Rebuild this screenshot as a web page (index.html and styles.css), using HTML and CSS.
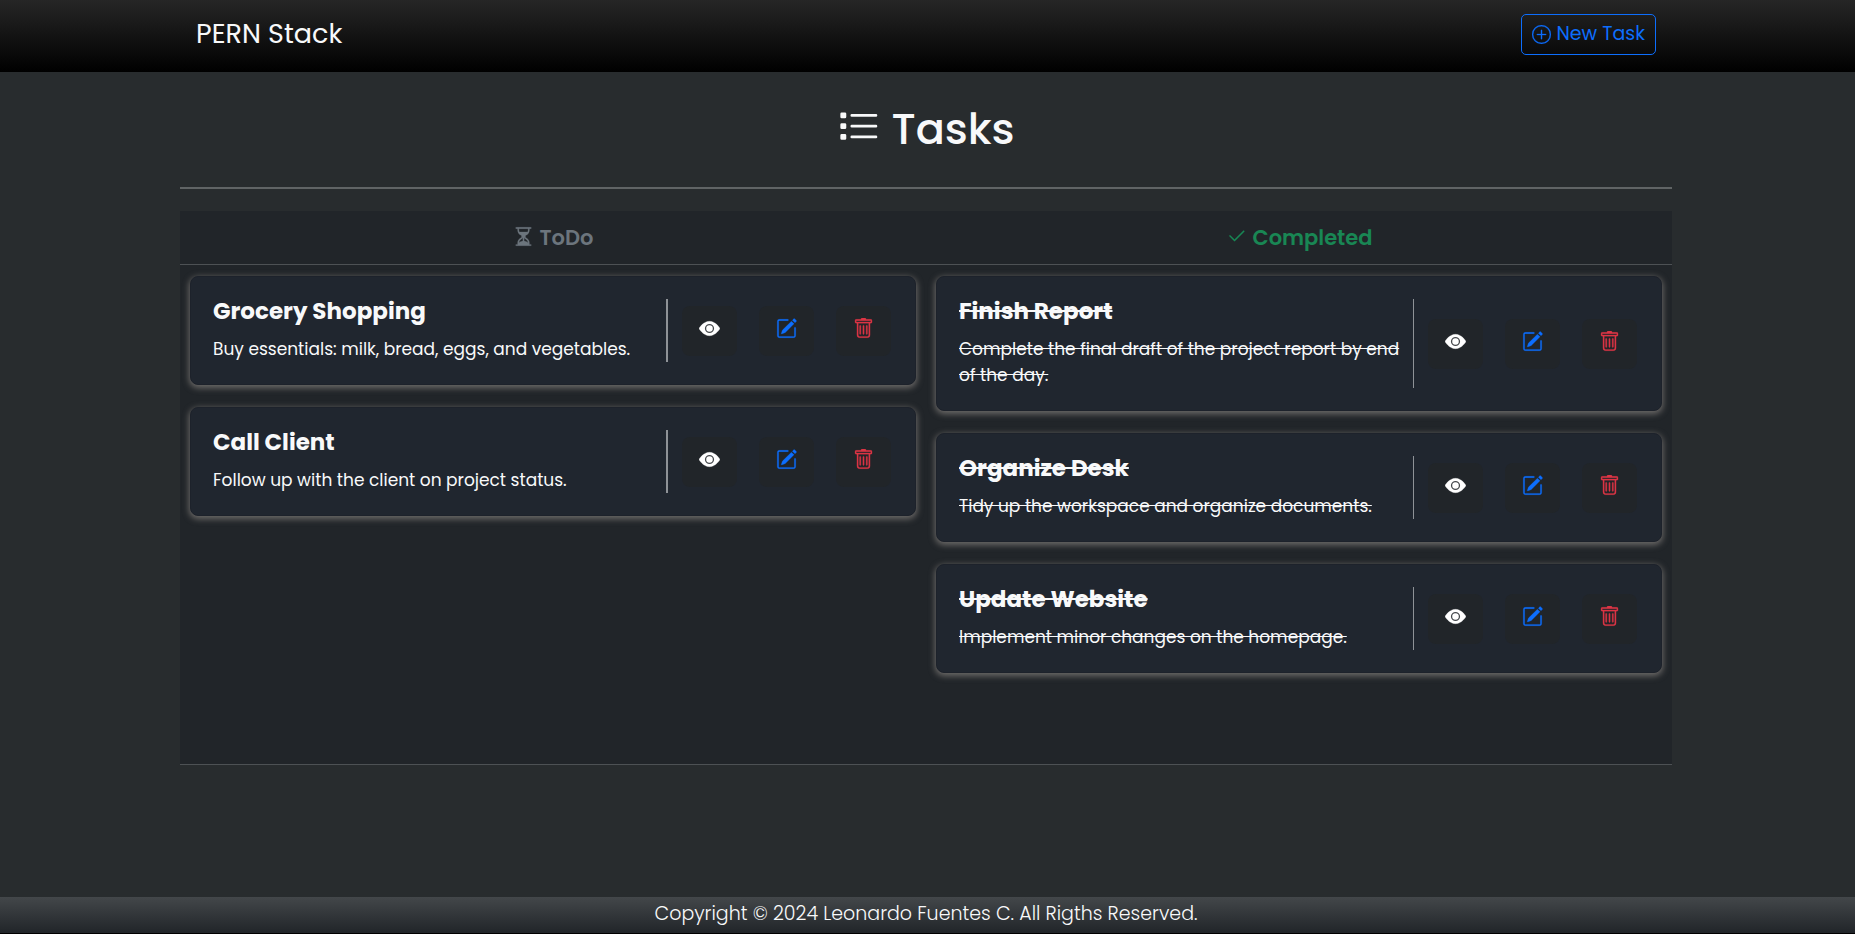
FILE: index.html
```html
<!DOCTYPE html>
<html lang="en">
<head>
<meta charset="utf-8">
<meta name="viewport" content="width=device-width, initial-scale=1">
<title>PERN Stack</title>
<link rel="stylesheet" href="styles.css">
</head>
<body>
<svg class="sprite" aria-hidden="true">
  <symbol id="eye" viewBox="0 0 16 16"><path d="M10.5 8a2.5 2.5 0 1 1-5 0 2.500 2.500 0 0 1 5 0"/><path d="M0 8s3-5.500 8-5.500S16 8 16 8s-3 5.500-8 5.500S0 8 0 8m8 3.500a3.500 3.500 0 1 0 0-7 3.500 3.500 0 0 0 0 7"/></symbol>
  <symbol id="edit" viewBox="0 0 16 16"><path d="M15.502 1.940a.5.5 0 0 1 0 .706L14.459 3.690l-2-2L13.502.646a.5.5 0 0 1 .707 0l1.293 1.293zm-1.750 2.456-2-2L4.939 9.210a.5.5 0 0 0-.121.196l-.805 2.414a.25.25 0 0 0 .316.316l2.414-.805a.5.5 0 0 0 .196-.12z"/><path fill-rule="evenodd" d="M1 13.500A1.500 1.500 0 0 0 2.500 15h11a1.500 1.500 0 0 0 1.500-1.500v-6a.5.5 0 0 0-1 0v6a.5.5 0 0 1-.5.5h-11a.5.5 0 0 1-.5-.5v-11a.5.5 0 0 1 .5-.5H9a.5.5 0 0 0 0-1H2.500A1.500 1.500 0 0 0 1 2.500z"/></symbol>
  <symbol id="trash" viewBox="0 0 16 16"><path d="M5.5 5.5A.5.5 0 0 1 6 6v6a.5.5 0 0 1-1 0V6a.5.5 0 0 1 .5-.5m2.500 0a.5.5 0 0 1 .5.5v6a.5.5 0 0 1-1 0V6a.5.5 0 0 1 .5-.5m3 .5a.5.5 0 0 0-1 0v6a.5.5 0 0 0 1 0z"/><path d="M14.5 3a1 1 0 0 1-1 1H13v9a2 2 0 0 1-2 2H5a2 2 0 0 1-2-2V4h-.5a1 1 0 0 1-1-1V2a1 1 0 0 1 1-1H6a1 1 0 0 1 1-1h2a1 1 0 0 1 1 1h3.500a1 1 0 0 1 1 1zM4.118 4 4 4.059V13a1 1 0 0 0 1 1h6a1 1 0 0 0 1-1V4.059L11.882 4zM2.500 3h11V2h-11z"/></symbol>
</svg>
<header class="navbar">
  <div class="navbar-inner">
    <a class="brand" href="#">PERN Stack</a>
    <a class="new-task" href="#new"><svg class="icon" viewBox="0 0 16 16" aria-hidden="true"><path d="M8 15A7 7 0 1 1 8 1a7 7 0 0 1 0 14m0 1A8 8 0 1 0 8 0a8 8 0 0 0 0 16"/><path d="M8 4a.5.5 0 0 1 .5.5v3h3a.5.5 0 0 1 0 1h-3v3a.5.5 0 0 1-1 0v-3h-3a.5.5 0 0 1 0-1h3v-3A.5.5 0 0 1 8 4"/></svg>New Task</a>
  </div>
</header>
<main class="page">
  <h1 class="title"><svg class="icon" viewBox="0 0 16 16" aria-hidden="true"><path fill-rule="evenodd" d="M5 11.500a.5.5 0 0 1 .5-.5h9a.5.5 0 0 1 0 1h-9a.5.5 0 0 1-.5-.5m0-4a.5.5 0 0 1 .5-.5h9a.5.5 0 0 1 0 1h-9a.5.5 0 0 1-.5-.5m0-4a.5.5 0 0 1 .5-.5h9a.5.5 0 0 1 0 1h-9a.5.5 0 0 1-.5-.5M1.750 2.400a.5.5 0 0 0-.5.5v1.200a.5.5 0 0 0 .5.5h1.200a.5.5 0 0 0 .5-.5V2.900a.5.5 0 0 0-.5-.5zm0 4h1.200a.5.5 0 0 1 .5.5v1.200a.5.5 0 0 1-.5.5h-1.200a.5.5 0 0 1-.5-.5V6.900a.5.5 0 0 1 .5-.5m0 4h1.200a.5.5 0 0 1 .5.5v1.200a.5.5 0 0 1-.5.5h-1.200a.5.5 0 0 1-.5-.5v-1.200a.5.5 0 0 1 .5-.5"/></svg>Tasks</h1>
  <hr class="rule">
  <div class="board">
    <section class="column">
      <h2 class="column-title todo"><svg class="icon" viewBox="0 0 16 16" aria-hidden="true"><path d="M2.500 15a.5.5 0 1 1 0-1h1v-1a4.500 4.500 0 0 1 2.557-4.060c.29-.139.443-.377.443-.590v-.7c0-.213-.154-.451-.443-.590A4.500 4.500 0 0 1 3.500 3V2h-1a.5.5 0 0 1 0-1h11a.5.5 0 0 1 0 1h-1v1a4.500 4.500 0 0 1-2.557 4.060c-.29.139-.443.377-.443.590v.7c0 .213.154.451.443.590A4.500 4.500 0 0 1 12.500 13v1h1a.5.5 0 0 1 0 1zm2-13v1c0 .537.120 1.045.337 1.500h6.326c.216-.455.337-.963.337-1.500V2zm3 6.350c0 .701-.478 1.236-1.011 1.492A3.500 3.500 0 0 0 4.500 13s.866-1.299 3-1.480zm1 0v3.170c2.134.181 3 1.480 3 1.480a3.500 3.500 0 0 0-1.989-3.158C8.978 9.586 8.500 9.052 8.500 8.351z"/></svg>ToDo</h2>
      <div class="cards">
        <article class="card">
          <div class="card-text"><h3>Grocery Shopping</h3><p>Buy essentials: milk, bread, eggs, and vegetables.</p></div>
          <div class="actions"><button class="view" aria-label="View"><svg class="icon"><use href="#eye"/></svg></button><button class="edit" aria-label="Edit"><svg class="icon"><use href="#edit"/></svg></button><button class="delete" aria-label="Delete"><svg class="icon"><use href="#trash"/></svg></button></div>
        </article>
        <article class="card">
          <div class="card-text"><h3>Call Client</h3><p>Follow up with the client on project status.</p></div>
          <div class="actions"><button class="view" aria-label="View"><svg class="icon"><use href="#eye"/></svg></button><button class="edit" aria-label="Edit"><svg class="icon"><use href="#edit"/></svg></button><button class="delete" aria-label="Delete"><svg class="icon"><use href="#trash"/></svg></button></div>
        </article>
      </div>
    </section>
    <section class="column">
      <h2 class="column-title completed"><svg class="icon" viewBox="0 0 16 16" aria-hidden="true"><path d="M13.854 3.646a.5.5 0 0 1 0 .708l-7 7a.5.5 0 0 1-.708 0l-3.500-3.500a.5.5 0 1 1 .708-.708L6.500 10.293l6.646-6.647a.5.5 0 0 1 .708 0"/></svg>Completed</h2>
      <div class="cards">
        <article class="card done">
          <div class="card-text"><h3>Finish Report</h3><p>Complete the final draft of the project report by end of the day.</p></div>
          <div class="actions"><button class="view" aria-label="View"><svg class="icon"><use href="#eye"/></svg></button><button class="edit" aria-label="Edit"><svg class="icon"><use href="#edit"/></svg></button><button class="delete" aria-label="Delete"><svg class="icon"><use href="#trash"/></svg></button></div>
        </article>
        <article class="card done">
          <div class="card-text"><h3>Organize Desk</h3><p>Tidy up the workspace and organize documents.</p></div>
          <div class="actions"><button class="view" aria-label="View"><svg class="icon"><use href="#eye"/></svg></button><button class="edit" aria-label="Edit"><svg class="icon"><use href="#edit"/></svg></button><button class="delete" aria-label="Delete"><svg class="icon"><use href="#trash"/></svg></button></div>
        </article>
        <article class="card done">
          <div class="card-text"><h3>Update Website</h3><p>Implement minor changes on the homepage.</p></div>
          <div class="actions"><button class="view" aria-label="View"><svg class="icon"><use href="#eye"/></svg></button><button class="edit" aria-label="Edit"><svg class="icon"><use href="#edit"/></svg></button><button class="delete" aria-label="Delete"><svg class="icon"><use href="#trash"/></svg></button></div>
        </article>
      </div>
    </section>
  </div>
</main>
<footer class="footer">Copyright © 2024 Leonardo Fuentes C. All Rigths Reserved.</footer>
</body>
</html>
```

FILE: styles.css
```css
* { box-sizing: border-box; }

body {
  margin: 0;
  min-height: 100vh;
  display: flex;
  flex-direction: column;
  background: #282c2e;
  color: #f8f9fa;
  font: 17px/26px Poppins, Inter, "Liberation Sans", sans-serif;
}

h1, h2, h3, p { margin: 0; }
a { text-decoration: none; }
.sprite { display: none; }
.icon { width: 1em; height: 1em; fill: currentColor; stroke: currentColor; stroke-width: 0.2px; flex: none; }

.navbar {
  background: linear-gradient(#262626, #000);
  padding: 14px 27px 17px 24px;
}

.navbar-inner {
  max-width: 1460px;
  margin: 0 auto;
  display: flex;
  justify-content: space-between;
  align-items: flex-start;
}

.brand { color: #f8f9fa; font-size: 27px; line-height: 39px; }

.new-task {
  display: flex;
  align-items: center;
  gap: 5px;
  border: 1px solid #0d6efd;
  border-radius: 5px;
  padding: 6px 10px 7px;
  color: #0d6efd;
  font-size: 19px;
}

.page { width: 100%; max-width: 1495px; padding-right: 3px; margin: 0 auto; flex: 1; }

.title {
  display: flex;
  justify-content: center;
  align-items: center;
  gap: 11px;
  padding: 30px 0;
  font-size: 43px;
  line-height: 55px;
  font-weight: 500;
}

.title .icon { margin-bottom: 4px; stroke-width: 0; }

.rule { margin: 0 0 22px; border: 0; height: 2px; background: #606465; }

.board {
  display: grid;
  grid-template-columns: 1fr 1fr;
  min-height: 554px;
  background: #212529;
  border-bottom: 1px solid #4d5154;
}

.column { display: flex; flex-direction: column; min-width: 0; }

.column-title {
  display: flex;
  justify-content: center;
  align-items: center;
  gap: 6px;
  padding: 10px;
  border-bottom: 1px solid #4d5154;
  font-size: 21px;
  line-height: 33px;
  font-weight: 600;
}

.column-title .icon { margin-bottom: 2px; }

.todo { color: #6c757d; }
.completed { color: #198754; }

.cards { display: flex; flex-direction: column; gap: 22px; padding: 11px 10px; }

.card {
  display: flex;
  padding: 22px 24px 22px 22px;
  border-radius: 8px;
  background: #20262f;
  border: 1px solid #1d222b;
  box-shadow: 0 2px 6px 1px #6c6a68;
}

.card-text { flex: 1; min-width: 0; }
.card h3 { margin-bottom: 12px; font-size: 23px; line-height: 25px; font-weight: 700; }
.done .card-text { text-decoration: line-through; }

.actions {
  display: flex;
  align-items: center;
  gap: 22px;
  padding-left: 14px;
  border-left: 2px solid #8e9297;
}

.done .actions { border-left-width: 1px; }

.actions button {
  display: grid;
  place-items: center;
  width: 55px;
  height: 50px;
  padding: 0 0 4px;
  border: 0;
  border-radius: 8px;
  background: #212529;
  font-size: 21px;
}

.actions .view { color: #fff; }
.actions .edit { color: #0d6efd; }
.actions .delete { color: #dc3545; }

.footer {
  padding: 4px 3px 6px 0;
  text-align: center;
  font-size: 19px;
  font-weight: 300;
  background: linear-gradient(#43474a, #212529);
  border-bottom: 1px solid #000;
}
```
